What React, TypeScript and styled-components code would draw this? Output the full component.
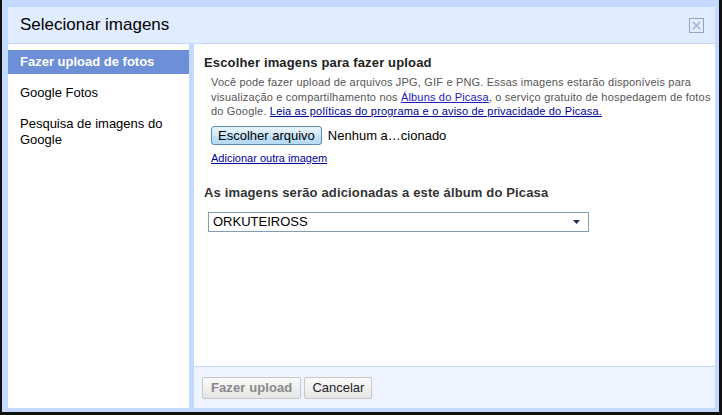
import React from 'react'
import styled, { createGlobalStyle } from 'styled-components'

const GlobalStyle = createGlobalStyle`
  html, body {
    margin: 0;
    padding: 0;
    background: #fff;
  }
  body {
    font-family: "Liberation Sans", Arial, sans-serif;
  }
`

const navItems = ['Fazer upload de fotos', 'Google Fotos', 'Pesquisa de imagens do Google']

const App = () => {
  const [active, setActive] = React.useState(0)

  return (
    <>
      <GlobalStyle />
      <Frame>
        <Header>
          <Title>Selecionar imagens</Title>
          <Close aria-label="Fechar">
            <svg width="9" height="9" viewBox="0 0 9 9">
              <path d="M1 1 L8 8 M8 1 L1 8" stroke="#aab3c4" strokeWidth="1.6" />
            </svg>
          </Close>
        </Header>
        <Body>
          <Sidebar>
            {navItems.map((item, i) => (
              <NavItem key={item} $active={i === active} onClick={() => setActive(i)}>
                {item}
              </NavItem>
            ))}
          </Sidebar>
          <Main>
            <Content>
              <SectionTitle>Escolher imagens para fazer upload</SectionTitle>
              <Desc>
                Você pode fazer upload de arquivos JPG, GIF e PNG. Essas imagens estarão disponíveis para
                <br />
                visualização e compartilhamento nos <Link href="#">Álbuns do Picasa</Link>, o serviço gratuito de hospedagem de fotos
                <br />
                do Google. <DarkLink href="#">Leia as políticas do programa e o aviso de privacidade do Picasa.</DarkLink>
              </Desc>
              <FileRow>
                <FileButton>Escolher arquivo</FileButton>
                <FileName>Nenhum a…cionado</FileName>
              </FileRow>
              <AddLink href="#">Adicionar outra imagem</AddLink>
              <AlbumTitle>As imagens serão adicionadas a este álbum do Picasa</AlbumTitle>
              <Select>
                <span>ORKUTEIROSS</span>
                <svg width="7" height="4" viewBox="0 0 7 4">
                  <path d="M0 0 H7 L3.5 4 Z" fill="#1d2f5e" />
                </svg>
              </Select>
            </Content>
            <Footer>
              <FooterButton disabled>Fazer upload</FooterButton>
              <FooterButton>Cancelar</FooterButton>
            </Footer>
          </Main>
        </Body>
      </Frame>
    </>
  )
}

export default App

const Frame = styled.div`
  width: 722px;
  height: 415px;
  box-sizing: border-box;
  background: #c3d9ff;
  border-left: 2px solid #111;
  border-right: 3px solid #111;
  border-bottom: 3px solid #111;
  padding: 7px 4px 4px 6px;
  display: flex;
  flex-direction: column;
`

const Header = styled.div`
  height: 36px;
  flex-shrink: 0;
  background: #e0ecff;
  border-bottom: 1px solid #c3d9ff;
  display: flex;
  align-items: center;
  justify-content: space-between;
  padding: 0 11px 0 12px;
`

const Title = styled.div`
  font-size: 17px;
  color: #000;
`

const Close = styled.div`
  width: 13px;
  height: 13px;
  border: 1px solid #97a3b8;
  display: flex;
  align-items: center;
  justify-content: center;
  cursor: pointer;
`

const Body = styled.div`
  flex: 1;
  display: flex;
  min-height: 0;
`

const Sidebar = styled.div`
  width: 181px;
  background: #fff;
  border-right: 5px solid #c3d9ff;
  padding-top: 6px;
`

const NavItem = styled.div<{ $active?: boolean }>`
  padding: 4px 12px;
  margin-bottom: 7px;
  font-size: 13px;
  line-height: 16px;
  cursor: pointer;
  color: ${(p) => (p.$active ? '#fff' : '#000')};
  background: ${(p) => (p.$active ? '#6d8fd8' : 'transparent')};
  font-weight: ${(p) => (p.$active ? 'bold' : 'normal')};
`

const Main = styled.div`
  flex: 1;
  display: flex;
  flex-direction: column;
  background: #fff;
  min-width: 0;
`

const Content = styled.div`
  flex: 1;
  padding: 11px 10px;
`

const SectionTitle = styled.div`
  font-size: 13px;
  line-height: 16px;
  font-weight: bold;
  letter-spacing: 0.15px;
  color: #222;
`

const Desc = styled.div`
  margin: 4px 0 0 7px;
  font-size: 11px;
  line-height: 14.5px;
  letter-spacing: 0.18px;
  white-space: nowrap;
  color: #555;
`

const Link = styled.a`
  color: #2020c0;
  text-decoration: underline;
`

const DarkLink = styled.a`
  color: #000099;
  text-decoration: underline;
`

const FileRow = styled.div`
  display: flex;
  align-items: center;
  margin: 7px 0 0 7px;
`

const FileButton = styled.button`
  height: 19px;
  padding: 0 6px;
  font-family: inherit;
  font-size: 13px;
  line-height: 17px;
  color: #000;
  border: 1px solid #5a8ab2;
  border-radius: 3px;
  background: linear-gradient(#e9f5fd, #cfe8f8 50%, #c0e0f6 51%, #b5dbf4);
  cursor: pointer;
`

const FileName = styled.span`
  margin-left: 6px;
  font-size: 13px;
  color: #000;
`

const AddLink = styled.a`
  display: block;
  margin: 7px 0 0 7px;
  font-size: 11px;
  line-height: 13px;
  color: #000099;
  text-decoration: underline;
`

const AlbumTitle = styled.div`
  margin-top: 20px;
  font-size: 13px;
  line-height: 16px;
  font-weight: bold;
  letter-spacing: 0.15px;
  color: #333;
`

const Select = styled.div`
  width: 381px;
  height: 20px;
  box-sizing: border-box;
  margin: 11px 0 0 4px;
  border: 1px solid #7f9db9;
  padding: 0 8px 0 4px;
  display: flex;
  align-items: center;
  justify-content: space-between;
  font-size: 13px;
  color: #000;
`

const Footer = styled.div`
  height: 41px;
  flex-shrink: 0;
  border-top: 1px solid #c3d9ff;
  background: #eef4ff;
  display: flex;
  align-items: center;
  gap: 3px;
  padding: 0 8px;
`

const FooterButton = styled.button`
  height: 22px;
  padding: 0 7px;
  font-family: inherit;
  font-size: 13px;
  color: #222;
  border: 1px solid #c8c8c8;
  border-radius: 2px;
  background: linear-gradient(#fafafa, #e6e6e6);
  cursor: pointer;
  &:disabled {
    padding: 0 8px;
    color: #888;
    font-weight: bold;
    letter-spacing: 0.1px;
    cursor: default;
  }
`
